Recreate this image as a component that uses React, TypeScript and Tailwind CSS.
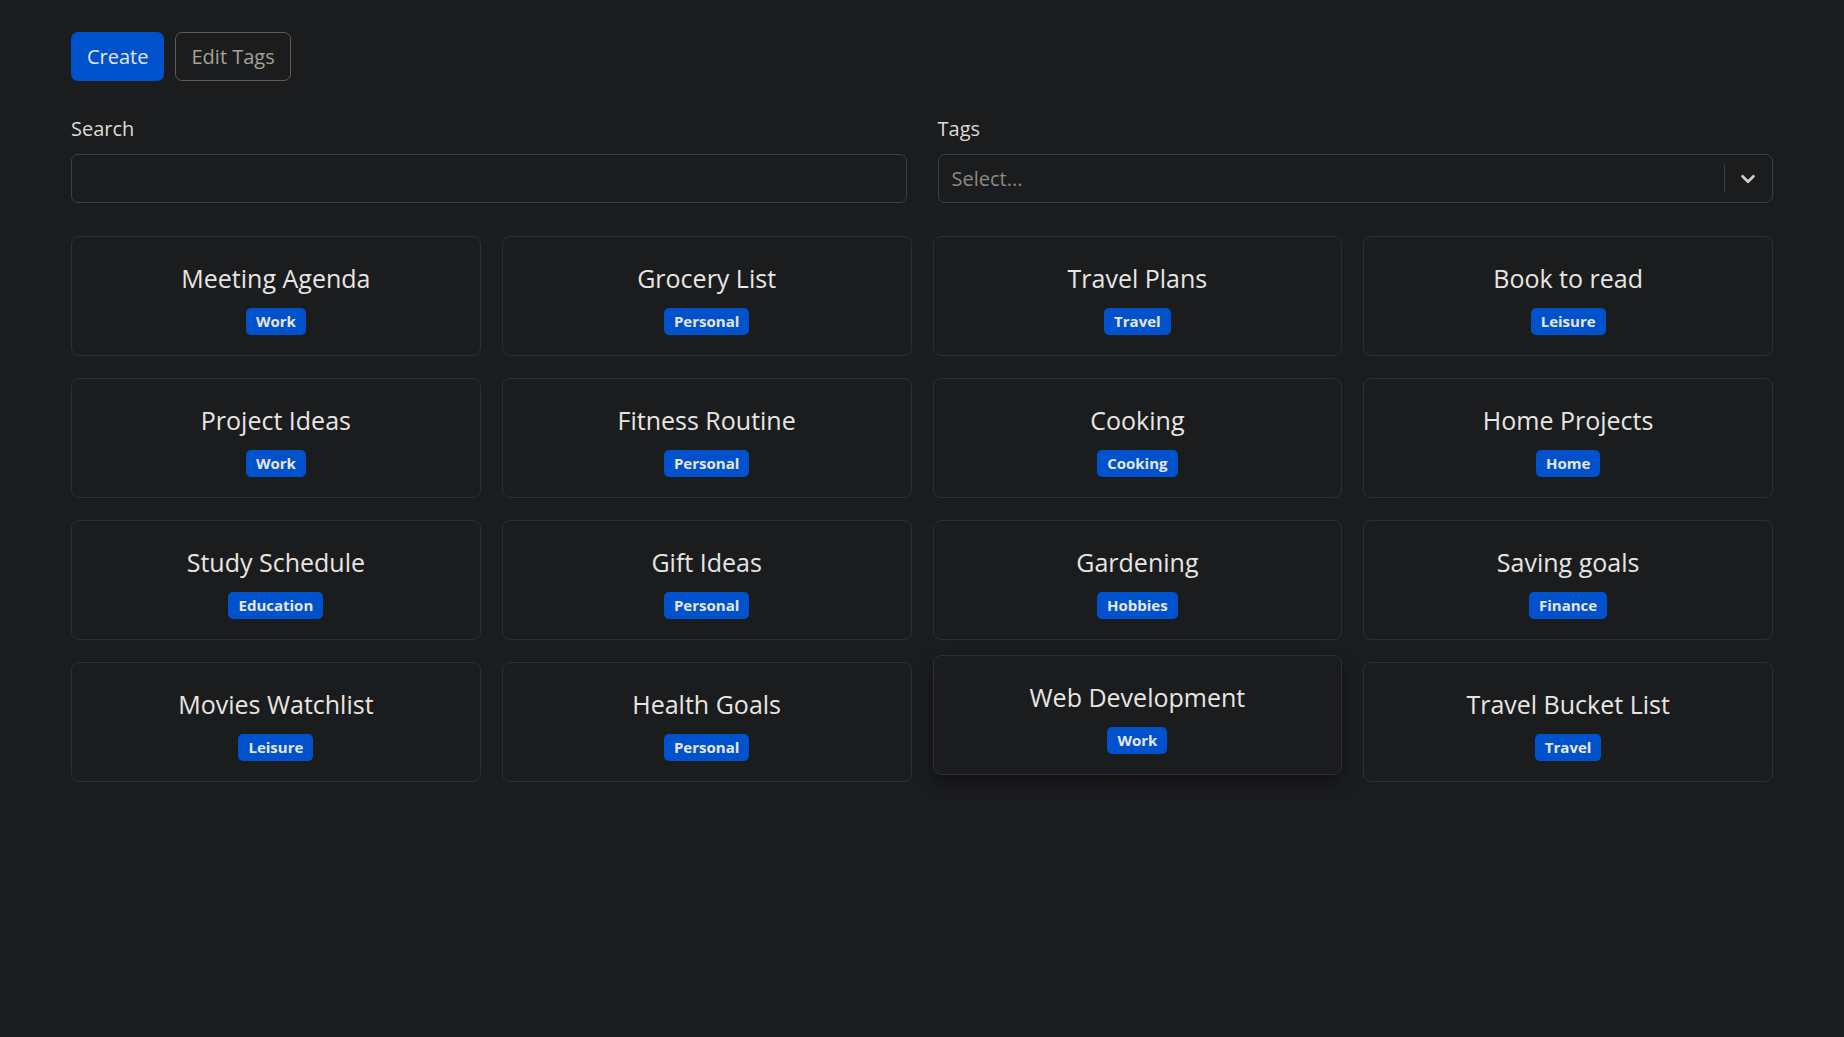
import { ChevronDown } from "lucide-react";

const notes = [
  { title: "Meeting Agenda", tag: "Work" },
  { title: "Grocery List", tag: "Personal" },
  { title: "Travel Plans", tag: "Travel" },
  { title: "Book to read", tag: "Leisure" },
  { title: "Project Ideas", tag: "Work" },
  { title: "Fitness Routine", tag: "Personal" },
  { title: "Cooking", tag: "Cooking" },
  { title: "Home Projects", tag: "Home" },
  { title: "Study Schedule", tag: "Education" },
  { title: "Gift Ideas", tag: "Personal" },
  { title: "Gardening", tag: "Hobbies" },
  { title: "Saving goals", tag: "Finance" },
  { title: "Movies Watchlist", tag: "Leisure" },
  { title: "Health Goals", tag: "Personal" },
  { title: "Web Development", tag: "Work", hovered: true },
  { title: "Travel Bucket List", tag: "Travel" },
];

function NoteCard({ title, tag, hovered }: { title: string; tag: string; hovered?: boolean }) {
  return (
    <div
      className={
        hovered
          ? "flex flex-col items-center rounded-[8px] border border-[#2c2e30] bg-[#1b1c1e] pt-[26px] pb-[20px] -translate-y-[7px] shadow-[0_8px_16px_rgba(0,0,0,0.35)]"
          : "flex flex-col items-center rounded-[8px] border border-[#2c2e30] bg-[#1b1c1e] pt-[26px] pb-[20px]"
      }
    >
      <div className="text-[25px] leading-[31px] text-[#e8e6e3]">{title}</div>
      <span className="mt-[14px] rounded-[5px] bg-[#0052cc] px-[10px] py-[5px] text-[15px] font-bold leading-[17px] text-[#e8e6e3]">
        {tag}
      </span>
    </div>
  );
}

export default function App() {
  return (
    <div className="min-h-[1037px] w-full bg-[#1b1c1e] px-[71px] pt-[32px] font-['Open_Sans',sans-serif] text-[#e8e6e3]">
      <div className="flex gap-[11px]">
        <button className="h-[49px] rounded-[7px] bg-[#0052cc] px-[16px] text-[20px] text-[#e8e6e3]">Create</button>
        <button className="h-[49px] rounded-[7px] border border-[#5f5a52] px-[15px] text-[20px] text-[#a8a196]">Edit Tags</button>
      </div>

      <div className="mt-[32px] grid grid-cols-2 gap-x-[31px]">
        <div>
          <label className="block text-[20px] leading-[31px] text-[#dedbd6]">Search</label>
          <input className="mt-[10px] block h-[49px] w-full rounded-[7px] border border-[#3c3f42] bg-[#1b1c1e] px-[15px] text-[20px] text-[#e8e6e3] outline-none" />
        </div>
        <div>
          <label className="block text-[20px] leading-[31px] text-[#dedbd6]">Tags</label>
          <div className="mt-[10px] flex h-[49px] w-full items-center rounded-[7px] border border-[#3c3f42] bg-[#1b1c1e] pl-[13px]">
            <span className="flex-1 text-[20px] text-[#8e887f]">Select...</span>
            <span className="h-[27px] w-px bg-[#3c3f42]" />
            <span className="flex w-[47px] items-center justify-center pr-[2px] text-[#cfcac3]">
              <ChevronDown size={22} strokeWidth={3} />
            </span>
          </div>
        </div>
      </div>

      <div className="mt-[33px] grid grid-cols-4 gap-x-[21px] gap-y-[22px]">
        {notes.map((n) => (
          <NoteCard key={n.title} title={n.title} tag={n.tag} hovered={n.hovered} />
        ))}
      </div>
    </div>
  );
}
